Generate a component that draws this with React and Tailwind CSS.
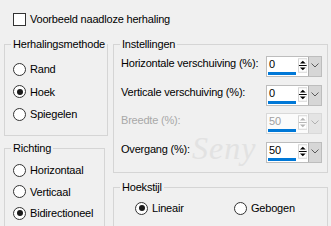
import React from "react";

// Radio button like the classic Windows dialog control
const Radio = ({ label, checked }) => (
  <div className="flex items-center gap-[4px] h-[16px]">
    <span className="w-[13px] h-[13px] rounded-full border border-[#333333] bg-white flex items-center justify-center">
      {checked && <span className="w-[6px] h-[6px] rounded-full bg-[#1a1a1a]" />}
    </span>
    <span>{label}</span>
  </div>
);

const Spin = ({ disabled }) => {
  const c = disabled ? "#b4b4b4" : "#000000";
  return (
    <svg width="10" height="15" viewBox="0 0 10 15" className="mt-[1px] mx-[1px]">
      <rect x="0.5" y="0.5" width="9" height="14" fill="#ffffff" stroke="#d4d4d4" />
      <polygon points="2,5.5 5,2.5 8,5.5" fill={c} />
      <line x1="1" y1="7.5" x2="9" y2="7.5" stroke={c} strokeWidth="1" />
      <polygon points="2,9.5 8,9.5 5,12.5" fill={c} />
    </svg>
  );
};

// numeric field + spin buttons + dropdown
const NumField = ({ value, disabled }) => (
  <div
    className={`flex h-[21px] w-[56px] border ${
      disabled ? "border-[#d9d9d9] bg-[#fbfbfb]" : "border-[#bdbdbd] bg-white"
    }`}
  >
    <div className="w-[31px] flex flex-col">
      <span className={`pl-[2px] leading-[15px] ${disabled ? "text-[#a0a0a0]" : ""}`}>
        {value}
      </span>
      <span className="mt-auto mb-[1px] ml-[1px] w-[28px] h-[3px] bg-[#0078d7]" />
    </div>
    <Spin disabled={disabled} />
    <div
      className={`ml-auto w-[13px] h-full flex justify-center pt-[6px] border-l ${
        disabled ? "bg-[#e4e4e4] border-[#cfcfcf]" : "bg-[#d6d6d6] border-[#adadad]"
      }`}
    >
      <svg width="8" height="5" viewBox="0 0 8 5">
        <polyline
          points="0.5,0.5 4,4 7.5,0.5"
          fill="none"
          stroke={disabled ? "#b0b0b0" : "#5a5a5a"}
          strokeWidth="1"
        />
      </svg>
    </div>
  </div>
);

const FieldRow = ({ label, value, disabled }) => (
  <div className="flex items-start justify-between h-[21px]">
    <span className={disabled ? "text-[#a8a8a8]" : ""}>{label}</span>
    <NumField value={value} disabled={disabled} />
  </div>
);

const Group = ({ title, className, children }) => (
  <fieldset className={`border border-[#d5d5d5] p-0 m-0 ${className}`}>
    <legend className="ml-[6px] px-[2px] leading-[14px]">{title}</legend>
    {children}
  </fieldset>
);

export default function App() {
  return (
    <div className="relative w-[331px] h-[226px] overflow-hidden bg-[#f0f0f0] text-black text-[11px] leading-[14px] tracking-[-0.2px] font-['Liberation_Sans',Arial,sans-serif]">
      <div className="pt-[12px] pl-[13px] flex items-center gap-[4px]">
        <span className="w-[13px] h-[13px] border border-[#333333] bg-white" />
        <span>Voorbeeld naadloze herhaling</span>
      </div>

      <div className="flex gap-[8px] pl-[4px] mt-[11px]">
        <div className="w-[101px] flex flex-col gap-[5px]">
          <Group title="Herhalingsmethode" className="h-[99px]">
            <div className="flex flex-col gap-[6.5px] pt-[10px] pl-[8px]">
              <Radio label="Rand" />
              <Radio label="Hoek" checked />
              <Radio label="Spiegelen" />
            </div>
          </Group>
          <Group title="Richting" className="h-[100px]">
            <div className="flex flex-col gap-[5.5px] pt-[7px] pl-[8px]">
              <Radio label="Horizontaal" />
              <Radio label="Verticaal" />
              <Radio label="Bidirectioneel" checked />
            </div>
          </Group>
        </div>

        <div className="w-[215px] flex flex-col gap-[7px]">
          <Group title="Instellingen" className="h-[136px]">
            <div className="flex flex-col gap-[7.5px] pt-[5px] pl-[7px] pr-[5px]">
              <FieldRow label="Horizontale verschuiving (%):" value="0" />
              <FieldRow label="Verticale verschuiving (%):" value="0" />
              <FieldRow label="Breedte (%):" value="50" disabled />
              <FieldRow label="Overgang (%):" value="50" />
            </div>
          </Group>
          <Group title="Hoekstijl" className="h-[60px]">
            <div className="flex pt-[6px] pl-[21px]">
              <div className="w-[99px]">
                <Radio label="Lineair" checked />
              </div>
              <Radio label="Gebogen" />
            </div>
          </Group>
        </div>
      </div>

      {/* faint signature watermark */}
      <span className="absolute left-[192px] top-[132px] text-[32px] leading-[32px] italic font-['Liberation_Serif',serif] text-[#e2e2e2] pointer-events-none tracking-[1px]">
        Seny
      </span>
    </div>
  );
}
